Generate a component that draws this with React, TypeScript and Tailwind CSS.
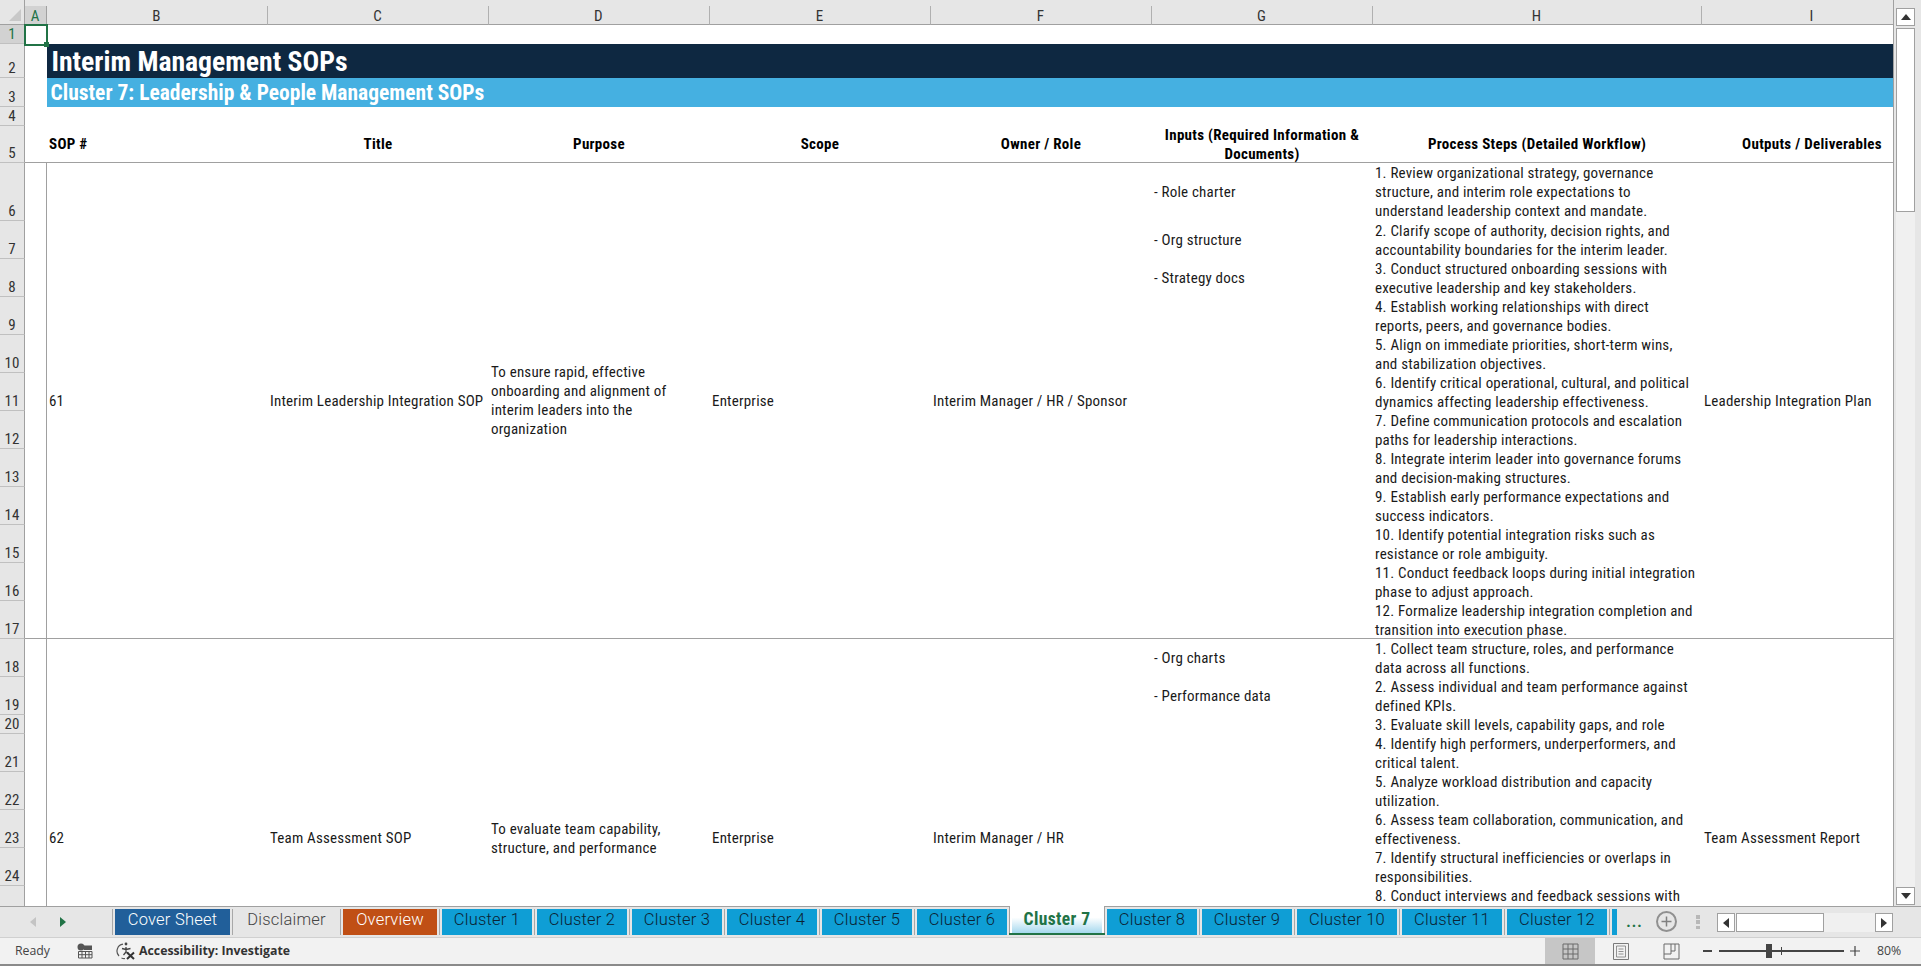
import { ReactNode } from "react"

const block1 = [
  { input: "- Role charter", step: ["1. Review organizational strategy, governance", "structure, and interim role expectations to", "understand leadership context and mandate."] },
  { input: "- Org structure", step: ["2. Clarify scope of authority, decision rights, and", "accountability boundaries for the interim leader."] },
  { input: "- Strategy docs", step: ["3. Conduct structured onboarding sessions with", "executive leadership and key stakeholders."] },
  { input: "", step: ["4. Establish working relationships with direct", "reports, peers, and governance bodies."] },
  { input: "", step: ["5. Align on immediate priorities, short-term wins,", "and stabilization objectives."] },
  { input: "", step: ["6. Identify critical operational, cultural, and political", "dynamics affecting leadership effectiveness."] },
  { input: "", step: ["7. Define communication protocols and escalation", "paths for leadership interactions."] },
  { input: "", step: ["8. Integrate interim leader into governance forums", "and decision-making structures."] },
  { input: "", step: ["9. Establish early performance expectations and", "success indicators."] },
  { input: "", step: ["10. Identify potential integration risks such as", "resistance or role ambiguity."] },
  { input: "", step: ["11. Conduct feedback loops during initial integration", "phase to adjust approach."] },
  { input: "", step: ["12. Formalize leadership integration completion and", "transition into execution phase."] },
]

const block2 = [
  { input: "- Org charts", step: ["1. Collect team structure, roles, and performance", "data across all functions."] },
  { input: "- Performance data", step: ["2. Assess individual and team performance against", "defined KPIs."] },
  { input: "", step: ["3. Evaluate skill levels, capability gaps, and role"] },
  { input: "", step: ["4. Identify high performers, underperformers, and", "critical talent."] },
  { input: "", step: ["5. Analyze workload distribution and capacity", "utilization."] },
  { input: "", step: ["6. Assess team collaboration, communication, and", "effectiveness."] },
  { input: "", step: ["7. Identify structural inefficiencies or overlaps in", "responsibilities."] },
  { input: "", step: ["8. Conduct interviews and feedback sessions with"] },
  { input: "", step: [] },
  { input: "", step: [] },
  { input: "", step: [] },
]

const columns = ["B", "C", "D", "E", "F", "G", "H", "I"]

const tabs = [
  { name: "Cover Sheet", cls: "w-[115px] bg-[#215f9a] text-white" },
  { name: "Disclaimer", cls: "w-[103px] text-[#444444]" },
  { name: "Overview", cls: "w-[94px] bg-[#c04f15] text-white" },
  { name: "Cluster 1", cls: "w-[90px] bg-[#0f9ed5] text-[#0b2233]" },
  { name: "Cluster 2", cls: "w-[90px] bg-[#0f9ed5] text-[#0b2233]" },
  { name: "Cluster 3", cls: "w-[90px] bg-[#0f9ed5] text-[#0b2233]" },
  { name: "Cluster 4", cls: "w-[90px] bg-[#0f9ed5] text-[#0b2233]" },
  { name: "Cluster 5", cls: "w-[90px] bg-[#0f9ed5] text-[#0b2233]" },
  { name: "Cluster 6", cls: "w-[90px] bg-[#0f9ed5] text-[#0b2233]" },
]

const tabsAfter = [
  { name: "Cluster 8", cls: "w-[90px]" },
  { name: "Cluster 9", cls: "w-[90px]" },
  { name: "Cluster 10", cls: "w-[100px]" },
  { name: "Cluster 11", cls: "w-[100px]" },
  { name: "Cluster 12", cls: "w-[100px]" },
]

function RowHead({ n, selected }: { n?: number; selected?: boolean }) {
  return (
    <div className={"flex items-end justify-center border-r border-b border-r-[#a0a0a0] border-b-[#c0c0c0] leading-[17px] " + (selected ? "bg-[#d2d2d2] text-[#217346]" : "bg-[#e6e6e6] text-[#333333]")}>
      {n}
    </div>
  )
}

function Merged({ span, children }: { span: string; children?: ReactNode }) {
  return <div className={span + " flex items-center bg-white pt-[1px] pl-[2.5px] whitespace-nowrap border-b border-[#a0a0a0]"}>{children}</div>
}

function SopBlock({ first, rows, span, cells }: { first: number; rows: typeof block1; span: string; cells: ReactNode[] }) {
  return (
    <>
      {rows.map((r, i) => (
        <Row key={i} n={first + i} row={r} last={i === rows.length - 1} span={span} cells={i === 0 ? cells : null} />
      ))}
    </>
  )
}

function Row({ n, row, last, span, cells }: { n: number; row: { input: string; step: string[] }; last: boolean; span: string; cells: ReactNode[] | null }) {
  const line = last ? " border-b border-[#a0a0a0]" : ""
  return (
    <>
      {/* labels from row 25 on sit below the fold */}
      <RowHead n={n < 25 ? n : undefined} />
      {cells && <Merged span={span + " border-r border-r-[#a0a0a0]"} />}
      {cells && cells.slice(0, 5).map((c, i) => <Merged key={i} span={span}>{c}</Merged>)}
      <div className={"flex items-center bg-white pl-[2.5px] whitespace-nowrap" + line}>{row.input}</div>
      <div className={"bg-white pt-[1px] pl-[2.5px] whitespace-nowrap" + line}>
        {row.step.map((s) => (
          <div key={s}>{s}</div>
        ))}
      </div>
      {cells && <Merged span={span}>{cells[5]}</Merged>}
    </>
  )
}

function Sheet() {
  return (
    <div className="w-[1894px] h-[906px] overflow-hidden border-r border-[#a0a0a0] bg-[#e6e6e6]">
      <div className="grid w-max grid-cols-[25px_21.5px_repeat(6,221px)_329px_221px] grid-rows-[25px_19px_34px_29px_19px_37px_58px_repeat(13,38px)_19px_repeat(8,38px)] text-[15px] leading-[19px] tracking-[0.2px] text-[#1a1a1a]">
        {/* column headers */}
        <div className="flex items-end justify-end border-r border-b border-[#a0a0a0] pr-[3px] pb-[3px]">
          <svg width="12" height="12" viewBox="0 0 12 12">
            <path d="M12 0V12H0Z" fill="#c8c8c8" />
          </svg>
        </div>
        <div className="mt-[6px] flex items-center justify-center border-r border-b border-[#a0a0a0] bg-[#d2d2d2] pt-[2px] text-[#217346]">A</div>
        {columns.map((c) => (
          <div key={c} className="mt-[6px] flex items-center justify-center border-r border-b border-r-[#b0b0b0] border-b-[#a0a0a0] pt-[2px] text-[#333333]">
            {c}
          </div>
        ))}

        {/* rows 1 to 5 */}
        <RowHead n={1} selected />
        <div className="relative bg-white">
          <div className="absolute -top-[1px] -left-[1px] -right-[1px] -bottom-[1.5px] z-10 border-2 border-[#217346]">
            <div className="absolute -right-[3px] -bottom-[3px] h-[5px] w-[5px] bg-[#217346]" />
          </div>
        </div>
        <div className="col-span-8 bg-white" />

        <RowHead n={2} />
        <div className="bg-white" />
        <div className="col-span-8 flex items-center bg-[#0e2841] pl-[5px] text-[27.7px] font-bold tracking-normal text-white whitespace-nowrap">
          Interim Management SOPs
        </div>

        <RowHead n={3} />
        <div className="bg-white" />
        <div className="col-span-8 flex items-center bg-[#45b0e1] pl-[4px] text-[21.5px] font-bold tracking-normal text-white whitespace-nowrap">
          Cluster 7: Leadership &amp; People Management SOPs
        </div>

        <RowHead n={4} />
        <div className="col-span-9 bg-white" />

        <RowHead n={5} />
        <div className="border-b border-[#a0a0a0] bg-white" />
        <div className="flex items-center bg-white pl-[2.5px] font-bold tracking-[0.3px] text-black border-b border-[#a0a0a0]">SOP #</div>
        {["Title", "Purpose", "Scope", "Owner / Role"].map((h) => (
          <div key={h} className="flex items-center justify-center bg-white font-bold tracking-[0.3px] text-black border-b border-[#a0a0a0]">
            {h}
          </div>
        ))}
        <div className="flex items-center justify-center bg-white pt-[2px] text-center font-bold tracking-[0.3px] text-black border-b border-[#a0a0a0]">
          Inputs (Required Information &amp;
          <br />
          Documents)
        </div>
        {["Process Steps (Detailed Workflow)", "Outputs / Deliverables"].map((h) => (
          <div key={h} className="flex items-center justify-center bg-white font-bold tracking-[0.3px] text-black border-b border-[#a0a0a0] whitespace-nowrap">
            {h}
          </div>
        ))}

        <SopBlock
          first={6}
          rows={block1}
          span="row-span-12"
          cells={[
            "61",
            "Interim Leadership Integration SOP",
            <span key="d">
              To ensure rapid, effective
              <br />
              onboarding and alignment of
              <br />
              interim leaders into the
              <br />
              organization
            </span>,
            "Enterprise",
            "Interim Manager / HR / Sponsor",
            "Leadership Integration Plan",
          ]}
        />
        <SopBlock
          first={18}
          rows={block2}
          span="row-span-11"
          cells={[
            "62",
            "Team Assessment SOP",
            <span key="d">
              To evaluate team capability,
              <br />
              structure, and performance
            </span>,
            "Enterprise",
            "Interim Manager / HR",
            "Team Assessment Report",
          ]}
        />
      </div>
    </div>
  )
}

function ScrollButton({ path }: { path: string }) {
  return (
    <div className="flex h-[18px] w-[19px] shrink-0 items-center justify-center border border-[#a0a0a0] bg-white">
      <svg width="10" height="6" viewBox="0 0 10 6">
        <path d={path} fill="#333333" />
      </svg>
    </div>
  )
}

function VerticalScroll() {
  return (
    <div className="flex h-[906px] w-[27px] flex-col items-center bg-[#e6e6e6] pt-[8px] pb-[1px] pr-[4px]">
      <ScrollButton path="M5 0L10 6H0Z" />
      <div className="mt-[2px] h-[184px] w-[19px] shrink-0 border border-[#a0a0a0] bg-white" />
      <div className="w-[19px] flex-1 bg-[#f0f0f0]" />
      <ScrollButton path="M5 6L10 0H0Z" />
    </div>
  )
}

function Sep() {
  return <div className="mx-[2px] h-[26px] w-px shrink-0 bg-[#a8a8a8]" />
}

function TabStrip() {
  return (
    <div className="flex h-[32px] items-start border-t border-b border-t-[#a0a0a0] border-b-[#d0d0d0] bg-[#e6e6e6] pt-[2px] text-[16.5px] leading-[21px] font-['Roboto',sans-serif] font-light tracking-[0.22px]">
      <div className="flex h-[26px] w-[110px] shrink-0 items-center pl-[30px]">
        <svg width="6" height="10" viewBox="0 0 6 10">
          <path d="M6 0V10L0 5Z" fill="#c4c4c4" />
        </svg>
        <svg width="6" height="10" viewBox="0 0 6 10" className="ml-[24px]">
          <path d="M0 0V10L6 5Z" fill="#217346" />
        </svg>
      </div>
      <Sep />
      {tabs.map((t, i) => (
        <div key={t.name} className="flex items-start">
          {i > 0 && <Sep />}
          <div className={"h-[26px] shrink-0 text-center whitespace-nowrap " + t.cls}>{t.name}</div>
        </div>
      ))}
      <div className="relative z-10 mx-[2px] -mt-[3px] h-[29px] w-[96px] shrink-0 border-x border-[#a0a0a0] bg-white px-[2px] pt-[3px]">
        <div className="h-[24px] bg-linear-to-b from-white from-35% to-[#a5d8ee] text-center text-[17.5px] leading-[21px] font-['Roboto_Condensed',sans-serif] font-bold tracking-[0.4px] text-[#217346] whitespace-nowrap">
          Cluster 7
        </div>
        <div className="-mx-[3px] h-[2px] bg-[#217346]" />
      </div>
      {tabsAfter.map((t, i) => (
        <div key={t.name} className="flex items-start">
          {i > 0 && <Sep />}
          <div className={"h-[26px] shrink-0 bg-[#0f9ed5] text-center text-[#0b2233] whitespace-nowrap " + t.cls}>{t.name}</div>
        </div>
      ))}
      <Sep />
      <div className="h-[26px] w-[5px] shrink-0 bg-[#0f9ed5]" />
      <div className="ml-[9px] w-[15px] text-[18px] font-medium tracking-[0.5px] text-[#217346] leading-[24px]">...</div>
      <div className="ml-[15px] mt-[2px] flex h-[21px] w-[21px] shrink-0 items-center justify-center rounded-full border-2 border-[#909090]">
        <svg width="11" height="11" viewBox="0 0 11 11">
          <path d="M5.5 0.5V10.5M0.5 5.5H10.5" stroke="#808080" strokeWidth="1.5" />
        </svg>
      </div>
      <div className="ml-[19px] mt-[6px] flex h-[14px] flex-col justify-between">
        <div className="h-[3.5px] w-[3.5px] bg-[#b8b8b8]" />
        <div className="h-[3.5px] w-[3.5px] bg-[#b8b8b8]" />
        <div className="h-[3.5px] w-[3.5px] bg-[#b8b8b8]" />
      </div>
      <div className="ml-[17px] mt-[4px] flex h-[19px] w-[176px] shrink-0 items-stretch bg-[#f0f0f0]">
        <div className="flex w-[18px] items-center justify-center border border-[#a0a0a0] bg-white">
          <svg width="6" height="10" viewBox="0 0 6 10">
            <path d="M6 0V10L0 5Z" fill="#333333" />
          </svg>
        </div>
        <div className="ml-[1px] w-[88px] border border-[#a0a0a0] bg-white" />
        <div className="ml-auto flex w-[18px] items-center justify-center border border-[#a0a0a0] bg-white">
          <svg width="6" height="10" viewBox="0 0 6 10">
            <path d="M0 0V10L6 5Z" fill="#333333" />
          </svg>
        </div>
      </div>
    </div>
  )
}

function StatusBar() {
  return (
    <div className="flex h-[28px] items-center border-b-2 border-[#8a8a8a] bg-[#f2f2f2] font-['Open_Sans',sans-serif] text-[12.3px] text-[#444444]">
      <span className="ml-[15px] w-[62px]">Ready</span>
      <svg width="16" height="16" viewBox="0 0 16 16" className="shrink-0">
        <circle cx="4" cy="4" r="3.5" fill="#555555" />
        <path d="M7 2.5H15V7H7Z" fill="#555555" />
        <path d="M1.5 8.5H15V15H1.5Z" fill="none" stroke="#555555" />
        <path d="M5 8.5V15M8.5 8.5V15M12 8.5V15M1.5 11.7H15" stroke="#555555" />
      </svg>
      <svg width="20" height="18" viewBox="0 0 20 18" className="ml-[23px] shrink-0">
        <path d="M7 2.2A7 7 0 0 0 3 14M5.5 16A7 7 0 0 0 9 16.5" fill="none" stroke="#555555" strokeWidth="1.2" />
        <circle cx="10" cy="2" r="1.4" fill="#444444" />
        <path d="M6 6.5L10 7.5L14.5 6.5M10 5V10L7.5 13M10 10L12.5 11" fill="none" stroke="#444444" strokeWidth="1.3" />
        <path d="M11 10.5L18 17M18 10.5L11 17" stroke="#333333" strokeWidth="2" />
      </svg>
      <span className="ml-[3px] font-bold tracking-normal text-[#333333]">Accessibility: Investigate</span>
      <div className="ml-auto flex h-full items-center">
        <div className="flex h-full w-[50px] items-center justify-center bg-[#c6c6c6]">
          <svg width="17" height="17" viewBox="0 0 17 17">
            <path d="M1 1H16V16H1ZM6 1V16M11 1V16M1 6H16M1 11H16" fill="none" stroke="#6a6a6a" />
          </svg>
        </div>
        <div className="ml-[1px] flex h-full w-[50px] items-center justify-center">
          <svg width="16" height="17" viewBox="0 0 16 17">
            <path d="M0.5 0.5H15.5V16.5H0.5Z" fill="none" stroke="#7a7a7a" />
            <path d="M3.5 3H12.5V14H3.5ZM5.5 6H10.5M5.5 8.5H10.5M5.5 11H10.5" fill="none" stroke="#7a7a7a" strokeWidth="0.8" />
          </svg>
        </div>
        <div className="ml-[1px] flex h-full w-[49px] items-center justify-center">
          <svg width="17" height="17" viewBox="0 0 17 17">
            <path d="M1 1H16V16H1ZM1 11H8V1M8 8H12V1" fill="none" stroke="#6a6a6a" />
          </svg>
        </div>
        <div className="ml-[7px] h-[1.5px] w-[9px] bg-[#444444]" />
        <div className="relative ml-[7px] h-[1.5px] w-[125px] bg-[#444444]">
          <div className="absolute -top-[6px] left-[47px] h-[14px] w-[6px] bg-[#444444]" />
          <div className="absolute -top-[3px] left-[62px] h-[8px] w-px bg-[#444444]" />
        </div>
        <svg width="10" height="10" viewBox="0 0 10 10" className="ml-[6px]">
          <path d="M5 0V10M0 5H10" stroke="#444444" strokeWidth="1.2" />
        </svg>
        <span className="ml-[17px] mr-[20px] w-[24px]">80%</span>
      </div>
    </div>
  )
}

export default function App() {
  return (
    <div className="h-[966px] w-[1921px] overflow-hidden bg-[#e6e6e6] font-['Roboto_Condensed',sans-serif]">
      <div className="flex">
        <Sheet />
        <VerticalScroll />
      </div>
      <TabStrip />
      <StatusBar />
    </div>
  )
}
